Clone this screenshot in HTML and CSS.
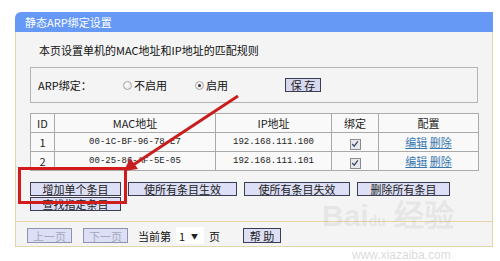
FILE: index.html
```html
<!DOCTYPE html>
<html lang="zh-CN">

<head>
  <meta charset="UTF-8" />
  <title>静态ARP绑定设置</title>
  <link rel="stylesheet" href="styles.css">
</head>

<body>

  <div class="panel">
    <div class="panel-head">静态ARP绑定设置</div>

    <div class="panel-main">
      <div class="panel-body">
        <p class="intro">本页设置单机的MAC地址和IP地址的匹配规则</p>

        <!-- ARP switch -->
        <div class="bind-box">
          <span class="bind-label">ARP绑定：</span>
          <span class="radio"><span class="dot"></span>不启用</span>
          <span class="radio radio-on"><span class="dot"></span>启用</span>
          <button class="btn btn-save">保 存</button>
        </div>

        <!-- Rule list -->
        <table class="rules">
          <colgroup>
            <col class="c-id">
            <col class="c-mac">
            <col class="c-ip">
            <col class="c-bind">
            <col class="c-cfg">
          </colgroup>
          <tr>
            <th>ID</th>
            <th>MAC地址</th>
            <th>IP地址</th>
            <th>绑定</th>
            <th>配置</th>
          </tr>
          <tr>
            <td>1</td>
            <td class="mono">00-1C-BF-96-78-E7</td>
            <td class="mono">192.168.111.100</td>
            <td><span class="check"><svg viewBox="0 0 10 10" width="8" height="8"><path d="M1.5 5 L4 7.8 L8.6 1.8" fill="none" stroke="#3a4a6a" stroke-width="1.6"/></svg></span></td>
            <td><a href="#">编辑</a> <a href="#">删除</a></td>
          </tr>
          <tr>
            <td>2</td>
            <td class="mono">00-25-86-AF-5E-05</td>
            <td class="mono">192.168.111.101</td>
            <td><span class="check"><svg viewBox="0 0 10 10" width="8" height="8"><path d="M1.5 5 L4 7.8 L8.6 1.8" fill="none" stroke="#3a4a6a" stroke-width="1.6"/></svg></span></td>
            <td><a href="#">编辑</a> <a href="#">删除</a></td>
          </tr>
        </table>

        <div class="actions">
          <button class="btn w-91">增加单个条目</button>
          <button class="btn w-109">使所有条目生效</button>
          <button class="btn w-106">使所有条目失效</button>
          <button class="btn w-93">删除所有条目</button>
          <button class="btn w-91">查找指定条目</button>
        </div>
      </div>

      <div class="panel-foot">
        <button class="btn btn-page" disabled>上一页</button>
        <button class="btn btn-page" disabled>下一页</button>
        <span class="page-text">当前第</span>
        <span class="page-select">1<span class="caret">▼</span></span>
        <span class="page-unit">页</span>
        <button class="btn btn-help">帮 助</button>
      </div>
    </div>
  </div>

  <!-- red annotation drawn over the screenshot -->
  <svg class="mark" width="500" height="261" viewBox="0 0 500 261">
    <rect x="19.5" y="168.5" width="106" height="34" fill="none" stroke="#d21c1c" stroke-width="3"/>
    <line x1="238" y1="96" x2="133" y2="165" stroke="#c81e1e" stroke-width="3"/>
    <polygon points="124,171 138,169 130,158" fill="#c81e1e"/>
  </svg>

  <div class="watermark">
    <span class="wm-big">Bai<span class="wm-du">du</span> 经验</span>
    <span class="wm-url">www.xiazaiba.com</span>
  </div>

</body>

</html>
```

FILE: styles.css
```css
body {
  margin: 0;
  background-color: #fff;
  color: #111;
  font-family: "Noto Sans CJK SC", "DejaVu Sans", sans-serif;
  font-size: 11px;
  line-height: 14px;
}

.panel {
  width: 478px;
  margin: 12px 0 0 15px;
}

.panel-head {
  height: 20px;
  line-height: 20px;
  padding-left: 10px;
  background-color: #6699f6;
  color: #fff;
  border-radius: 6px 0 0 0;
}

.panel-main {
  background-color: #f4f4f4;
  border: 1px solid #e4d5a6;
  border-top: none;
}

.panel-body {
  padding: 11px 14px 10px 14px;
}

.intro {
  margin: 0;
  padding-left: 9px;
  color: #111;
}

.bind-box {
  height: 36px;
  box-sizing: border-box;
  margin-top: 10px;
  border: 1px solid #b4b4b4;
  display: flex;
  align-items: center;
  padding-left: 7px;
}

.bind-label {
  width: 85px;
}

.radio {
  display: flex;
  align-items: center;
  gap: 2px;
}

.radio + .radio {
  margin-left: 28px;
}

.radio .dot {
  width: 7px;
  height: 7px;
  border-radius: 50%;
  border: 1px solid #a8a8a8;
  background: radial-gradient(circle at 40% 40%, #fff, #dcdcdc);
  position: relative;
}

.radio-on .dot::after {
  content: "";
  position: absolute;
  left: 2px;
  top: 2px;
  width: 3px;
  height: 3px;
  border-radius: 50%;
  background-color: #333;
}

.btn {
  font: inherit;
  height: 14px;
  line-height: 12px;
  padding: 0;
  border: 1px solid #3c3c52;
  background-color: #dcdff5;
  color: #222;
  box-sizing: border-box;
  cursor: pointer;
}

.btn-save {
  width: 36px;
  margin-left: 57px;
  background-color: #d6d8ee;
}

.rules {
  margin-top: 10px;
  width: 449px;
  table-layout: fixed;
  border-collapse: collapse;
  border: 1px solid #aaa;
  background-color: #f9f9f9;
}

.c-id { width: 24px; }
.c-mac { width: 161px; }
.c-ip { width: 116px; }
.c-bind { width: 47px; }
.c-cfg { width: 100px; }

.rules th,
.rules td {
  border: 1px solid #aaa;
  height: 18px;
  padding: 0;
  text-align: center;
  font-weight: normal;
  color: #222;
  line-height: 18px;
}

.rules .mono {
  font-family: "Liberation Mono", monospace;
  font-size: 9px;
}

.rules a {
  color: #3a78b0;
  text-decoration: underline;
}

.check {
  display: inline-flex;
  align-items: center;
  justify-content: center;
  width: 9px;
  height: 9px;
  border: 1px solid #8c8c8c;
  background-color: #e8e8ec;
  vertical-align: middle;
}

.actions {
  margin-top: 11px;
  display: flex;
  flex-wrap: wrap;
  column-gap: 7px;
  row-gap: 1px;
}

.w-91 { width: 91px; }
.w-93 { width: 93px; }
.w-106 { width: 106px; }
.w-109 { width: 109px; }

.panel-foot {
  border-top: 1px solid #e4d5a6;
  padding: 5px 0 2px 11px;
  display: flex;
  align-items: center;
}

.btn-page {
  width: 45px;
  height: 15px;
  margin-right: 11px;
  color: #a4a8c0;
  border-color: #8e92aa;
  cursor: default;
}

.page-text {
  margin-left: -1px;
}

.page-select {
  margin-left: 5px;
  width: 28px;
  height: 17px;
  box-sizing: border-box;
  background-color: #fff;
  display: flex;
  align-items: center;
  padding-left: 3px;
  gap: 6px;
}

.caret {
  font-size: 7px;
  color: #222;
}

.page-unit {
  margin-left: 5px;
}

.btn-help {
  width: 38px;
  height: 15px;
  margin-left: 23px;
}

.mark {
  position: absolute;
  left: 0;
  top: 0;
  pointer-events: none;
}

.watermark {
  position: absolute;
  left: 322px;
  top: 196px;
  width: 175px;
  pointer-events: none;
  color: rgba(170, 170, 170, 0.2);
}

.wm-big {
  display: block;
  font-family: "Liberation Sans", sans-serif;
  font-size: 30px;
  line-height: 40px;
  font-weight: bold;
}

.wm-du {
  font-size: 14px;
}

.wm-url {
  display: block;
  margin: 8px 0 0 30px;
  font-family: "Liberation Sans", sans-serif;
  font-size: 12px;
  line-height: 13px;
  color: rgba(170, 170, 170, 0.45);
}
```
